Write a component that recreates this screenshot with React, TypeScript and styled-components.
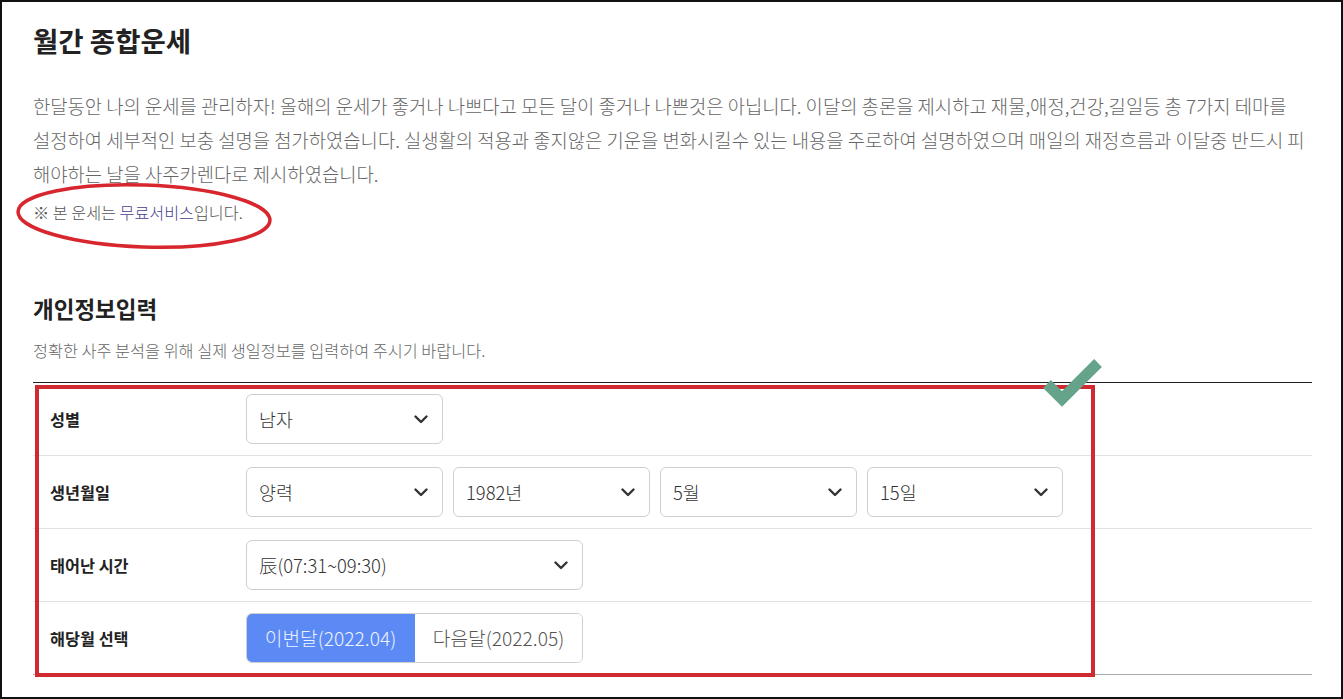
import React from "react"
import styled, { createGlobalStyle } from "styled-components"

const GlobalStyle = createGlobalStyle`
  body {
    margin: 0;
    background: #fff;
    font-family: "Noto Sans CJK KR", "Noto Sans", sans-serif;
  }
`

const Frame = styled.div`
  position: relative;
  width: 1343px;
  height: 699px;
  box-sizing: border-box;
  border: 2px solid #111;
  padding: 0 29px 0 31px;
  overflow: hidden;
  color: #222;
`

const Title = styled.h1`
  margin: 0;
  padding-top: 20px;
  font-size: 27.5px;
  line-height: 36px;
  font-weight: 700;
  color: #222;
`

const Desc = styled.p`
  margin: 31px 0 0;
  font-size: 18.8px;
  line-height: 34px;
  font-weight: 300;
  color: #666;
  white-space: pre;
`

const Note = styled.p`
  margin: 9px 0 0;
  font-size: 16.2px;
  line-height: 24px;
  font-weight: 300;
  color: #555;
`

const Free = styled.span`
  color: #4a3d8f;
`

const SectionTitle = styled.h2`
  margin: 70px 0 0;
  font-size: 22.5px;
  line-height: 28px;
  font-weight: 700;
  color: #222;
`

const SubText = styled.p`
  margin: 18px 0 0;
  font-size: 16.3px;
  line-height: 20px;
  font-weight: 300;
  color: #666;
`

const Table = styled.div`
  margin-top: 22px;
  border-top: 1px solid #222;
`

const Row = styled.div<{ $last?: boolean }>`
  display: flex;
  align-items: center;
  height: 72px;
  border-bottom: 1px solid ${p => (p.$last ? "#aaa" : "#e2e2e2")};
`

const Label = styled.div`
  width: 213px;
  flex-shrink: 0;
  padding-left: 17px;
  box-sizing: border-box;
  font-size: 16.3px;
  font-weight: 700;
  color: #222;
`

const Fields = styled.div`
  display: flex;
  gap: 10px;
`

const Select = styled.div<{ $w: number }>`
  display: flex;
  align-items: center;
  justify-content: space-between;
  width: ${p => p.$w}px;
  height: 50px;
  box-sizing: border-box;
  padding: 0 14px 0 12px;
  border: 1px solid #cfcfcf;
  border-radius: 6px;
  font-size: 18.4px;
  font-weight: 300;
  color: #333;
  background: #fff;
`

const Toggle = styled.div`
  display: flex;
  width: 337px;
  height: 50px;
  box-sizing: border-box;
  border: 1px solid #cfcfcf;
  border-radius: 6px;
  overflow: hidden;
`

const ToggleBtn = styled.div<{ $active?: boolean }>`
  display: flex;
  align-items: center;
  justify-content: center;
  flex: ${p => (p.$active ? "0 0 169px" : "1")};
  margin: ${p => (p.$active ? "-1px 0 -1px -1px" : "0")};
  font-size: 19.2px;
  font-weight: 300;
  color: ${p => (p.$active ? "#eef3ff" : "#555")};
  background: ${p => (p.$active ? "#5b8af5" : "#fff")};
  box-shadow: ${p => (p.$active ? "2px 0 6px rgba(91,138,245,0.25)" : "none")};
`

const Overlay = styled.svg`
  position: absolute;
  left: 0;
  top: 0;
  pointer-events: none;
`

const Chevron = () => (
  <svg width="14" height="9" viewBox="0 0 14 9">
    <path d="M1.5 1.5 L7 7 L12.5 1.5" fill="none" stroke="#333" strokeWidth="2.4" strokeLinecap="round" strokeLinejoin="round" />
  </svg>
)

const Dropdown = ({ value, w }: { value: string; w: number }) => (
  <Select $w={w}>
    <span>{value}</span>
    <Chevron />
  </Select>
)

export default function App() {
  return (
    <>
      <GlobalStyle />
      <Frame>
        <Title>월간 종합운세</Title>
        <Desc>
          {"한달동안 나의 운세를 관리하자! 올해의 운세가 좋거나 나쁘다고 모든 달이 좋거나 나쁜것은 아닙니다. 이달의 총론을 제시하고 재물,애정,건강,길일등 총 7가지 테마를\n설정하여 세부적인 보충 설명을 첨가하였습니다. 실생활의 적용과 좋지않은 기운을 변화시킬수 있는 내용을 주로하여 설명하였으며 매일의 재정흐름과 이달중 반드시 피\n해야하는 날을 사주카렌다로 제시하였습니다."}
        </Desc>
        <Note>
          ※ 본 운세는 <Free>무료서비스</Free>입니다.
        </Note>
        <SectionTitle>개인정보입력</SectionTitle>
        <SubText>정확한 사주 분석을 위해 실제 생일정보를 입력하여 주시기 바랍니다.</SubText>
        <Table>
          <Row>
            <Label>성별</Label>
            <Fields>
              <Dropdown value="남자" w={197} />
            </Fields>
          </Row>
          <Row>
            <Label>생년월일</Label>
            <Fields>
              <Dropdown value="양력" w={197} />
              <Dropdown value="1982년" w={197} />
              <Dropdown value="5월" w={197} />
              <Dropdown value="15일" w={196} />
            </Fields>
          </Row>
          <Row>
            <Label>태어난 시간</Label>
            <Fields>
              <Dropdown value="辰(07:31~09:30)" w={337} />
            </Fields>
          </Row>
          <Row $last>
            <Label>해당월 선택</Label>
            <Toggle>
              <ToggleBtn $active>이번달(2022.04)</ToggleBtn>
              <ToggleBtn>다음달(2022.05)</ToggleBtn>
            </Toggle>
          </Row>
        </Table>
        <Overlay width="1343" height="699" viewBox="0 0 1343 699">
          <ellipse cx="142" cy="214" rx="126" ry="31" transform="rotate(2 142 214)" fill="none" stroke="#d7262d" strokeWidth="3.5" />
          <rect x="35" y="385" width="1056" height="288" fill="none" stroke="#d02a31" strokeWidth="4" />
          <path d="M1045 382 L1060 397 L1096 361" fill="none" stroke="#66a38b" strokeWidth="11" strokeLinejoin="miter" />
        </Overlay>
      </Frame>
    </>
  )
}
